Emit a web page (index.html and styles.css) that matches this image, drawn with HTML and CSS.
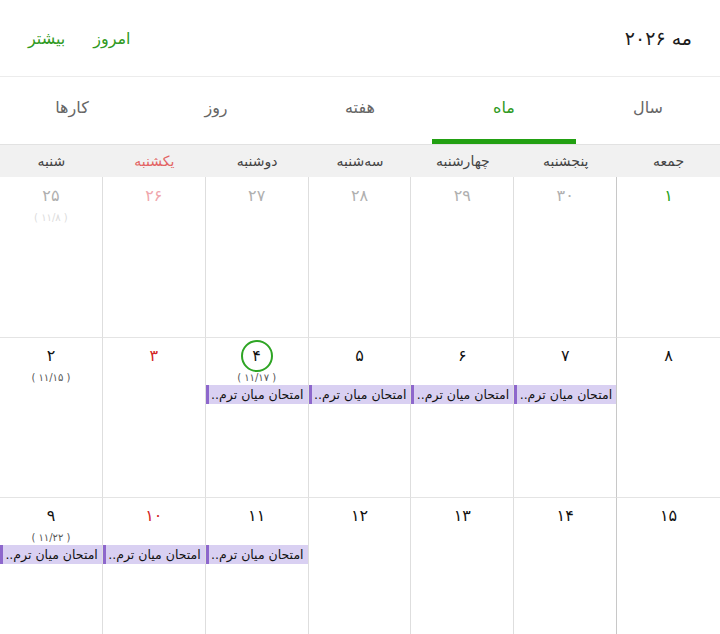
FILE: index.html
```html
<!DOCTYPE html>
<html lang="fa">
<head>
<meta charset="UTF-8" />
<meta name="viewport" content="width=device-width, initial-scale=1" />
<title>تقویم</title>
<link rel="stylesheet" href="styles.css">
</head>
<body>

<div class="app">
  <header class="topbar">
    <div class="title">مه ۲۰۲۶</div>
    <div class="actions">
      <a class="action">امروز</a>
      <a class="action">بیشتر</a>
    </div>
  </header>

  <nav class="tabs">
    <div class="tab">کارها</div>
    <div class="tab">روز</div>
    <div class="tab">هفته</div>
    <div class="tab active">ماه</div>
    <div class="tab">سال</div>
  </nav>

  <div class="weekdays">
    <div>شنبه</div>
    <div class="holiday">یکشنبه</div>
    <div>دوشنبه</div>
    <div>سه‌شنبه</div>
    <div>چهارشنبه</div>
    <div>پنجشنبه</div>
    <div>جمعه</div>
  </div>

  <div class="month">
    <!-- هفته اول -->
    <div class="day other"><div class="num">۲۵</div><div class="sub">( ۱۱/۸ )</div></div>
    <div class="day other sun"><div class="num">۲۶</div><div class="sub"></div></div>
    <div class="day other"><div class="num">۲۷</div><div class="sub"></div></div>
    <div class="day other"><div class="num">۲۸</div><div class="sub"></div></div>
    <div class="day other"><div class="num">۲۹</div><div class="sub"></div></div>
    <div class="day other"><div class="num">۳۰</div><div class="sub"></div></div>
    <div class="day first fri"><div class="num">۱</div><div class="sub"></div></div>

    <!-- هفته دوم -->
    <div class="day"><div class="num">۲</div><div class="sub">( ۱۱/۱۵ )</div></div>
    <div class="day sun"><div class="num">۳</div><div class="sub"></div></div>
    <div class="day"><div class="num"><span class="today">۴</span></div><div class="sub">( ۱۱/۱۷ )</div><div class="event">امتحان میان ترم..</div></div>
    <div class="day"><div class="num">۵</div><div class="sub"></div><div class="event">امتحان میان ترم..</div></div>
    <div class="day"><div class="num">۶</div><div class="sub"></div><div class="event">امتحان میان ترم..</div></div>
    <div class="day"><div class="num">۷</div><div class="sub"></div><div class="event">امتحان میان ترم..</div></div>
    <div class="day fri"><div class="num">۸</div><div class="sub"></div></div>

    <!-- هفته سوم -->
    <div class="day"><div class="num">۹</div><div class="sub">( ۱۱/۲۲ )</div><div class="event">امتحان میان ترم..</div></div>
    <div class="day sun"><div class="num">۱۰</div><div class="sub"></div><div class="event">امتحان میان ترم..</div></div>
    <div class="day"><div class="num">۱۱</div><div class="sub"></div><div class="event">امتحان میان ترم..</div></div>
    <div class="day"><div class="num">۱۲</div><div class="sub"></div></div>
    <div class="day"><div class="num">۱۳</div><div class="sub"></div></div>
    <div class="day"><div class="num">۱۴</div><div class="sub"></div></div>
    <div class="day fri"><div class="num">۱۵</div><div class="sub"></div></div>
  </div>
</div>

</body>
</html>
```

FILE: styles.css
```css
body {
  margin: 0;
  font-family: 'DejaVu Sans', sans-serif;
  background: #fff;
  color: #222;
  overflow: hidden;
}
.app {
  width: 720px;
  height: 634px;
  overflow: hidden;
}
.topbar {
  height: 76px;
  display: flex;
  direction: rtl;
  align-items: center;
  justify-content: space-between;
  padding: 0 28px;
  border-bottom: 1px solid #ececec;
}
.title {
  font-size: 19px;
  color: #1c1c1c;
}
.actions {
  display: flex;
  gap: 28px;
}
.action {
  color: #2f9a22;
  font-size: 16px;
  cursor: pointer;
}
.tabs {
  display: grid;
  grid-template-columns: repeat(5, 1fr);
  height: 67px;
  border-bottom: 1px solid #e2e2e2;
}
.tab {
  display: flex;
  align-items: center;
  justify-content: center;
  padding-bottom: 2px;
  font-size: 16px;
  color: #666;
  border-bottom: 5px solid transparent;
}
.tab.active {
  color: #2f9a22;
  border-bottom-color: #22a012;
}
.weekdays {
  display: grid;
  grid-template-columns: repeat(7, 1fr);
  height: 32px;
  background: #f1f1f1;
  font-size: 14px;
  color: #444;
}
.weekdays div {
  display: flex;
  align-items: center;
  justify-content: center;
}
.weekdays .holiday {
  color: #e36464;
}
.month {
  display: grid;
  grid-template-columns: repeat(7, 1fr);
  grid-auto-rows: 160px;
}
.day {
  border-right: 1px solid #dedede;
  border-top: 1px solid #e4e4e4;
  padding-top: 6px;
  text-align: center;
  overflow: hidden;
}
.day:nth-child(-n+7) {
  border-top: none;
  padding-top: 7px;
}
.day.fri {
  border-right: none;
}
.day:nth-child(7n+6) {
  border-right-color: #c8c8c8;
}
.num {
  height: 24px;
  line-height: 24px;
  font-size: 16px;
  color: #111;
}
.day.sun .num {
  color: #d32424;
}
.day.other .num {
  color: #b0b0b0;
}
.day.other.sun .num {
  color: #f0a7ad;
}
.day.first .num {
  color: #26a31a;
}
.today {
  display: inline-block;
  width: 28px;
  height: 28px;
  line-height: 28px;
  margin-top: -4px;
  border: 2px solid #2ea524;
  border-radius: 50%;
}
.sub {
  height: 14px;
  margin-top: 3px;
  line-height: 14px;
  font-size: 10px;
  color: #555;
}
.day.other .sub {
  color: #dcdcdc;
}
.event {
  height: 19px;
  line-height: 19px;
  padding-right: 4px;
  background: #d9d0f2;
  border-left: 3px solid #8d67cc;
  direction: rtl;
  text-align: right;
  font-size: 12.5px;
  color: #111;
  white-space: nowrap;
  overflow: hidden;
}
```
